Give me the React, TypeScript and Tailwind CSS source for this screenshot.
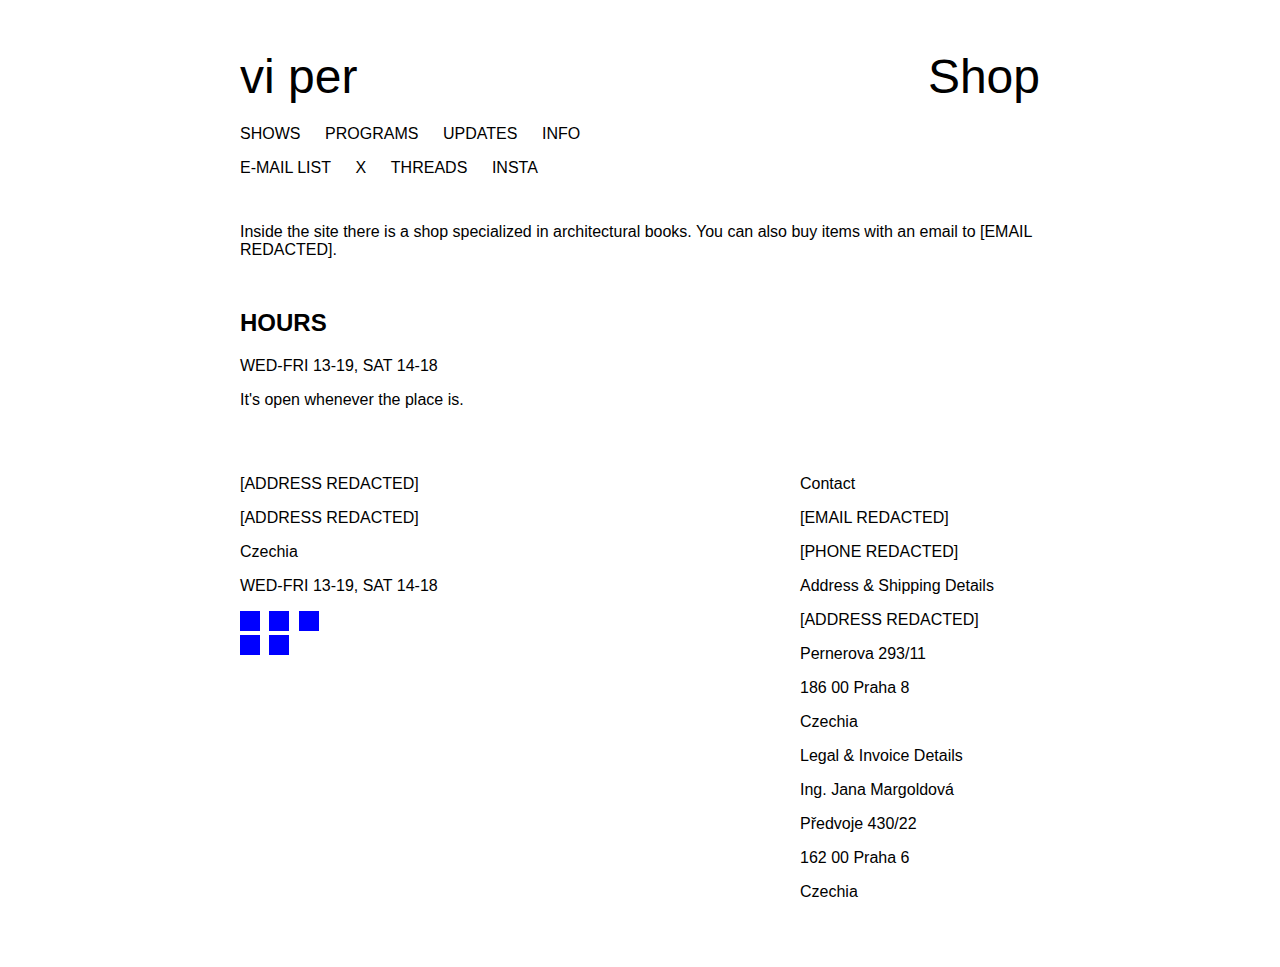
const nav1 = ["SHOWS", "PROGRAMS", "UPDATES", "INFO"];
const nav2 = ["E-MAIL LIST", "X", "THREADS", "INSTA"];

const leftFooter = ["[ADDRESS REDACTED]", "[ADDRESS REDACTED]", "Czechia", "WED-FRI 13-19, SAT 14-18"];
const rightFooter = [
  "Contact",
  "[EMAIL REDACTED]",
  "[PHONE REDACTED]",
  "Address & Shipping Details",
  "[ADDRESS REDACTED]",
  "Pernerova 293/11",
  "186 00 Praha 8",
  "Czechia",
  "Legal & Invoice Details",
  "Ing. Jana Margoldová",
  "Předvoje 430/22",
  "162 00 Praha 6",
  "Czechia",
];

function NavRow({ items }: { items: string[] }) {
  return (
    <div className="flex gap-x-[24.6px] leading-[18px]">
      {items.map((t) => (
        <a key={t} className="text-black">
          {t}
        </a>
      ))}
    </div>
  );
}

export default function App() {
  return (
    <div
      className="min-h-screen bg-white text-black text-[16px]"
      style={{ fontFamily: '"Liberation Sans", Arial, sans-serif' }}
    >
      <div className="mx-auto w-[800px] pt-[49px] pb-[60px]">
        <header className="flex justify-between items-start text-[48px] leading-[55px]">
          <div>vi per</div>
          <div>Shop</div>
        </header>

        <nav className="mt-[21px] flex flex-col gap-[16px]">
          <NavRow items={nav1} />
          <NavRow items={nav2} />
        </nav>

        <p className="mt-[46px] leading-[18px]">
          Inside the site there is a shop specialized in architectural books. You can also buy items with an email to
          [EMAIL REDACTED].
        </p>

        <section className="mt-[50px]">
          <h2 className="text-[24px] leading-[28px] font-bold">HOURS</h2>
          <div className="mt-[20px] flex flex-col gap-[16px] leading-[18px]">
            <p>WED-FRI 13-19, SAT 14-18</p>
            <p>It's open whenever the place is.</p>
          </div>
        </section>

        <footer className="mt-[66px] flex leading-[18px]">
          <div className="w-[560px] flex flex-col">
            <div className="flex flex-col gap-[16px]">
              {leftFooter.map((t, i) => (
                <div key={i}>{t}</div>
              ))}
            </div>
            <div className="mt-[16px] w-[80px] flex flex-wrap gap-x-[9.45px] gap-y-[4px]">
              {[...Array(5)].map((_, i) => (
                <div key={i} className="w-[20px] h-[20px] bg-[#0000ff]" />
              ))}
            </div>
          </div>
          <div className="flex-1 flex flex-col gap-[16px]">
            {rightFooter.map((t, i) => (
              <div key={i}>{t}</div>
            ))}
          </div>
        </footer>
      </div>
    </div>
  );
}
